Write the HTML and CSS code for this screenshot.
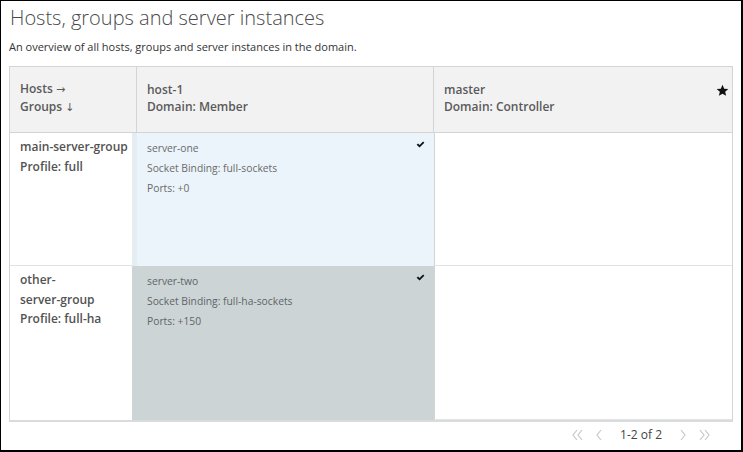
FILE: index.html
```html
<!DOCTYPE html>
<html>
<head>
<meta charset="utf-8">
<link rel="stylesheet" href="styles.css">
</head>
<body>
<div class="frame">
  <h1 class="title">Hosts, groups and server instances</h1>
  <p class="intro">An overview of all hosts, groups and server instances in the domain.</p>
  <div class="topology">
    <div class="head">
      <div class="hcell corner"><div>Hosts <span class="arrow">→</span><br>Groups <span class="arrow">↓</span></div></div>
      <div class="hcell"><div>host-1<br>Domain: Member</div></div>
      <div class="hcell last"><div>master<br>Domain: Controller</div>
        <svg class="star" viewBox="0 0 24 24" width="13" height="13"><path d="M12 1.5l3.1 7.1 7.7.6-5.9 5 1.8 7.6L12 17.8 5.3 21.8l1.8-7.6-5.9-5 7.7-.6z" fill="#111"/></svg>
      </div>
    </div>
    <div class="body">
      <div class="group">main-server-group<br>Profile: full</div>
      <div class="server started">
        <div>server-one</div>
        <div>Socket Binding: full-sockets</div>
        <div>Ports: +0</div>
        <svg class="check" viewBox="0 0 10 8" width="9" height="7"><path d="M0.6 4.3l1.6-1.5 1.7 1.7L8 0.6l1.4 1.4-5.5 5.4z" fill="#111"/></svg>
      </div>
      <div class="empty"></div>
      <div class="group g2">other-<br>server-group<br>Profile: full-ha</div>
      <div class="server selected">
        <div>server-two</div>
        <div>Socket Binding: full-ha-sockets</div>
        <div>Ports: +150</div>
        <svg class="check" viewBox="0 0 10 8" width="9" height="7"><path d="M0.6 4.3l1.6-1.5 1.7 1.7L8 0.6l1.4 1.4-5.5 5.4z" fill="#111"/></svg>
      </div>
      <div class="empty e2"></div>
    </div>
  </div>
  <div class="pager">
    <svg class="chev" viewBox="0 0 14 14" width="14" height="14"><path d="M7 2L3 7l4 5M12 2L8 7l4 5" fill="none" stroke="#c8c8c8" stroke-width="1.2"/></svg>
    <svg class="chev" viewBox="0 0 8 14" width="8" height="14"><path d="M6 2L2 7l4 5" fill="none" stroke="#c8c8c8" stroke-width="1.2"/></svg>
    <span class="count">1-2 of 2</span>
    <svg class="chev" viewBox="0 0 8 14" width="8" height="14"><path d="M2 2l4 5-4 5" fill="none" stroke="#c8c8c8" stroke-width="1.2"/></svg>
    <svg class="chev" viewBox="0 0 14 14" width="14" height="14"><path d="M2 2l4 5-4 5M7 2l4 5-4 5" fill="none" stroke="#c8c8c8" stroke-width="1.2"/></svg>
  </div>
</div>
</body>
</html>
```
FILE: styles.css
```css
html, body {
  margin: 0;
  padding: 0;
  background: #fff;
}
.frame {
  box-sizing: border-box;
  width: 743px;
  height: 452px;
  border: 1px solid #000;
  border-right-width: 2px;
  border-bottom-width: 2px;
  font-family: "Open Sans", "Liberation Sans", sans-serif;
  color: #363636;
  padding: 5px 0 0 8px;
}
.title {
  margin: 0 0 0 1px;
  font-size: 20px;
  line-height: 24px;
  font-weight: 300;
  color: #4a4a4a;
}
.intro {
  margin: 9px 0 0 0;
  font-size: 11px;
  line-height: 16px;
  color: #333;
}
.topology {
  margin-top: 11px;
  width: 724px;
  border: 1px solid #d4d4d4;
  border-bottom: 2px solid #d8dcdd;
  box-sizing: border-box;
}
.head {
  display: grid;
  grid-template-columns: 127px 297px 1fr;
  height: 65px;
  background: #f2f2f2;
  border-bottom: 1px solid #d4d4d4;
}
.hcell {
  display: flex;
  align-items: center;
  padding: 0 0 4px 10px;
  font-size: 12px;
  line-height: 17px;
  font-weight: 600;
  color: #5a5a5a;
  border-right: 1px solid #d4d4d4;
  position: relative;
}
.arrow {
  font-family: "DejaVu Sans", sans-serif;
  font-weight: 400;
  font-size: 11px;
}
.hcell.last {
  border-right: none;
}
.star {
  position: absolute;
  right: 3px;
  top: 17px;
}
.body {
  display: grid;
  grid-template-columns: 122px 302px 1fr;
  grid-template-rows: 133px 154px;
}
.group {
  padding: 4px 4px 0 10px;
  font-size: 12px;
  line-height: 19.5px;
  font-weight: 600;
  color: #525252;
  border-bottom: 1px solid #e2e2e2;
}
.g2, .e2 {
  border-bottom: none;
}
.empty {
  border-left: 1px solid #d4d4d4;
  border-bottom: 1px solid #e2e2e2;
}
.server {
  position: relative;
  padding: 5px 0 0 15px;
  font-size: 10.3px;
  line-height: 20px;
  color: #6a6a6a;
}
.server.started {
  background: #ebf4fa;
  border-left: 5px solid #e4edf2;
  padding-left: 10px;
}
.server.selected {
  background: #cdd4d6;
  color: #5f6567;
}
.check {
  position: absolute;
  right: 9px;
  top: 8px;
}
.pager {
  display: flex;
  justify-content: flex-end;
  align-items: center;
  gap: 11px;
  width: 724px;
  padding-right: 21px;
  box-sizing: border-box;
  margin-top: 4px;
}
.count {
  font-size: 12px;
  color: #444;
  margin: 0 6px 0 6px;
}
```
